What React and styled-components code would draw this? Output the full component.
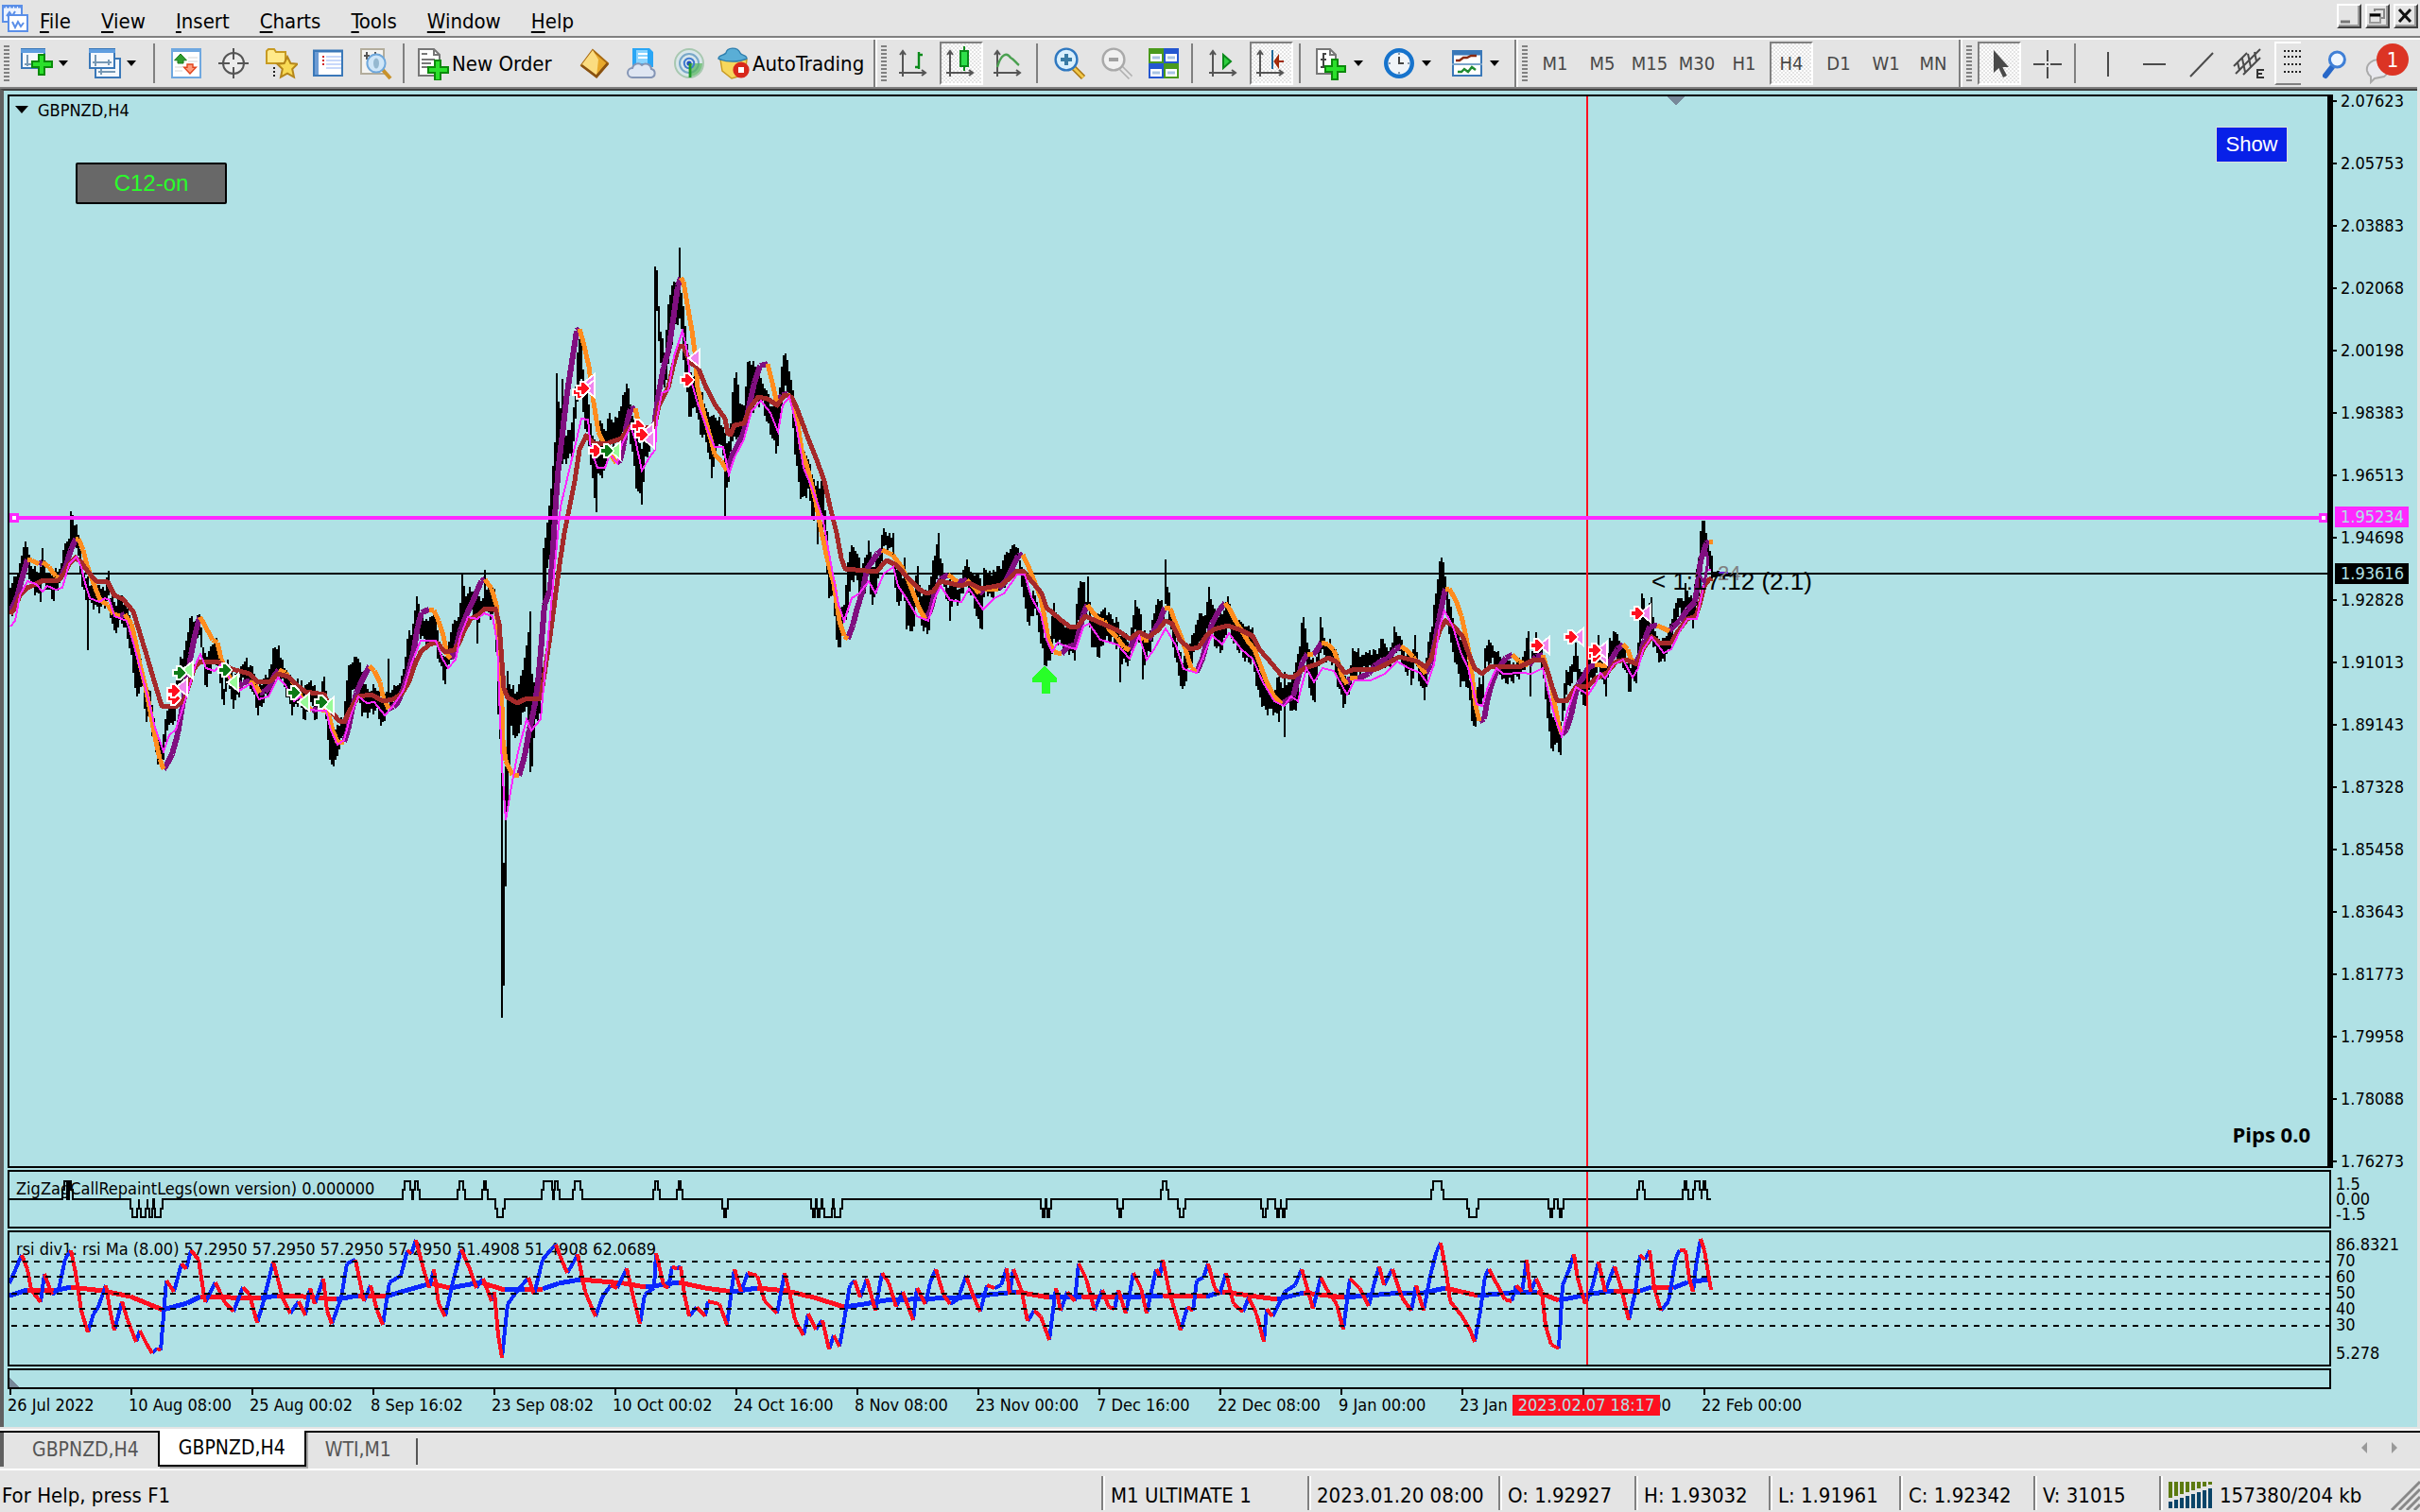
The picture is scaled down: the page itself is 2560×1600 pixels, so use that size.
import { Fragment } from 'react';
import styled, { createGlobalStyle } from 'styled-components';

const chartBg = '#b0e1e5';
const face = '#e4e4e4';
const uiFont = '"DejaVu Sans Condensed", "Noto Sans", sans-serif';

const GlobalStyle = createGlobalStyle`
	* {
		box-sizing: border-box;
	}

	body {
		margin: 0;
		background: ${face};
		font-family: ${uiFont};
		font-size: 22px;
		color: #000;
	}

	button {
		font: inherit;
		color: inherit;
		border: 0;
		padding: 0;
		background: none;
	}
`;

// ---------- series data ----------

const ma = `11,647 18,632 23,613 29,592 34,593 41,597 45,595 52,600 59,610 64,612 70,598 75,582 80,570 83,570 88,582 92,598 97,612 102,625 106,635 114,640 120,650 127,652 132,650 139,660 143,677 148,703 154,727 159,753 164,780 169,803 173,814 177,808 182,798 188,777 193,747 198,720 202,693 206,673 211,653 214,657 220,668 225,677 230,680 234,697 239,710 245,720 252,729 257,722 264,721 270,725 275,733 280,732 285,727 290,715 295,709 302,712 307,718 314,727 321,743 330,752 336,750 345,752 348,757 352,773 357,785 364,785 368,773 372,753 377,733 382,722 388,710 391,705 396,710 402,722 405,737 411,750 416,748 421,743 427,728 432,712 438,687 442,662 446,648 454,645 459,646 464,657 469,673 473,693 477,697 482,687 487,667 495,647 502,632 509,615 513,613 520,623 525,640 530,713 532,783 535,805 542,820 549,821 555,800 560,772 565,750 569,723 572,690 576,640 582,624 585,580 588,531 591,492 595,459 600,415 605,383 610,350 613,348 618,366 623,388 628,426 633,457 638,468 645,479 652,490 656,487 660,470 663,448 667,433 672,432 675,446 682,457 690,468 693,443 697,415 702,388 707,372 712,339 717,303 720,294 723,298 727,322 732,350 735,372 738,410 745,440 752,465 756,481 763,488 769,498 775,481 782,468 787,457 793,427 798,405 804,387 812,385 817,405 822,427 827,418 833,417 838,424 843,443 848,476 855,498 863,531 868,558 875,591 882,618 888,657 893,673 897,676 902,662 907,643 913,624 917,602 922,595 928,586 933,582 944,587 954,600 962,617 968,633 974,647 979,655 984,647 989,628 995,613 1003,608 1013,616 1023,614 1031,622 1036,628 1042,623 1056,623 1064,615 1070,603 1077,588 1082,587 1089,602 1095,617 1101,633 1105,653 1109,677 1115,690 1123,692 1129,685 1138,682 1142,667 1146,650 1150,640 1156,648 1162,655 1168,657 1174,667 1182,675 1189,685 1195,688 1199,677 1204,670 1210,677 1215,677 1221,667 1227,657 1232,643 1238,644 1242,655 1248,670 1254,687 1260,707 1266,711 1272,697 1277,678 1282,660 1289,647 1296,638 1301,645 1307,657 1315,670 1321,680 1327,687 1333,703 1340,722 1348,737 1356,745 1362,741 1368,737 1372,722 1378,700 1383,692 1389,693 1393,688 1398,680 1405,682 1411,688 1416,702 1420,717 1425,724 1428,717 1436,718 1448,713 1454,705 1460,700 1468,697 1476,687 1482,684 1488,688 1495,695 1502,705 1508,713 1513,703 1518,680 1522,657 1526,637 1529,623 1533,623 1540,635 1546,652 1550,670 1554,690 1557,713 1561,747 1565,763 1570,761 1573,743 1577,727 1582,713 1587,705 1593,696 1600,693 1607,700 1617,704 1625,695 1632,693 1637,710 1642,730 1645,747 1649,768 1652,777 1657,772 1662,757 1666,737 1670,723 1675,717 1680,707 1687,703 1700,705 1705,697 1711,687 1717,682 1722,687 1725,697 1730,703 1735,693 1740,677 1745,663 1753,662 1760,665 1766,668 1770,663 1777,657 1785,645 1793,637 1796,617 1799,593 1805,575 1808,573 1812,573`;

const slowMa = `11,650 16,643 21,630 29,622 38,618 46,614 62,614 68,607 73,597 80,590 86,595 93,605 102,615 114,616 121,630 130,634 141,647 148,670 155,693 162,717 168,737 171,747 186,748 195,740 200,725 205,708 211,700 232,701 245,708 264,713 273,722 286,721 294,713 305,716 314,725 323,732 343,735 352,755 359,763 364,764 371,750 379,737 393,735 405,742 416,740 425,734 432,723 439,703 445,690 454,682 462,680 471,690 480,688 486,680 491,667 498,655 507,650 513,644 524,644 528,660 531,701 533,728 537,738 547,744 555,740 572,739 577,706 582,673 587,635 592,597 597,564 602,539 608,509 613,476 620,461 628,469 643,469 657,464 667,451 673,451 692,454 697,429 707,410 712,388 718,367 723,366 730,384 738,388 747,410 757,429 767,443 770,459 773,460 777,450 787,448 793,432 802,420 812,422 822,429 830,418 837,420 843,432 853,459 863,484 872,509 878,536 885,564 890,591 894,602 927,605 938,593 948,598 962,613 972,623 980,628 987,626 995,615 1017,620 1025,617 1038,623 1060,619 1070,610 1076,604 1082,604 1093,617 1102,628 1107,643 1121,655 1133,664 1140,663 1148,652 1164,659 1182,667 1195,676 1205,669 1215,674 1225,667 1233,657 1240,660 1248,677 1259,687 1268,685 1276,673 1284,666 1299,662 1313,667 1325,673 1333,688 1346,703 1356,715 1368,717 1380,707 1393,703 1405,696 1413,700 1423,712 1433,708 1456,708 1468,702 1480,695 1500,700 1508,706 1514,697 1518,683 1523,667 1529,657 1537,662 1547,673 1553,690 1560,707 1568,713 1577,705 1607,706 1623,698 1632,698 1637,710 1642,727 1647,741 1657,742 1667,727 1680,726 1688,718 1700,712 1710,700 1720,698 1732,703 1738,687 1747,674 1757,681 1768,680 1775,668 1785,655 1794,652 1798,640 1803,620 1808,613 1812,612`;

const stopLine = `11,663 16,657 21,630 29,615 38,618 45,626 50,620 59,624 66,622 73,597 81,589 86,600 90,617 95,633 105,637 111,633 116,635 121,652 134,657 141,680 148,707 157,740 164,770 173,795 179,778 186,772 193,750 200,728 207,703 212,692 218,707 227,710 234,703 246,723 253,731 266,723 274,740 284,737 294,717 302,725 311,742 318,737 325,750 336,752 345,752 350,773 357,788 364,783 371,757 379,737 388,744 396,743 407,757 416,747 427,730 436,700 445,678 461,678 468,697 474,707 482,698 487,673 495,653 505,655 512,649 521,652 526,680 528,734 531,810 535,868 540,838 547,800 557,761 562,773 572,761 575,728 580,673 587,597 593,536 602,498 610,465 615,443 622,444 625,476 632,495 640,495 645,481 653,490 658,470 667,451 672,465 679,498 687,484 693,476 695,443 700,416 707,413 713,377 722,350 727,372 730,399 738,427 748,454 756,473 765,473 771,502 777,484 787,465 795,435 805,424 815,437 823,457 828,429 835,420 842,448 850,495 858,514 870,547 878,591 887,640 893,657 901,633 909,628 919,615 926,628 935,607 945,600 950,620 960,635 970,652 982,657 989,633 995,620 1005,635 1017,637 1025,623 1040,645 1052,633 1062,628 1076,608 1084,608 1091,632 1101,650 1107,677 1113,690 1119,680 1125,683 1138,687 1146,663 1152,660 1164,677 1182,682 1195,697 1205,673 1213,698 1221,687 1233,665 1244,683 1252,708 1266,712 1276,687 1282,672 1293,682 1300,670 1313,687 1325,697 1336,722 1348,742 1358,747 1366,737 1373,742 1382,707 1390,722 1399,707 1411,710 1425,735 1433,720 1450,720 1465,713 1478,700 1490,707 1502,712 1510,723 1517,703 1523,663 1528,646 1537,663 1545,690 1553,707 1562,745 1568,747 1574,727 1583,707 1590,713 1610,712 1620,713 1632,707 1638,733 1645,760 1652,779 1658,753 1667,727 1680,735 1688,723 1693,712 1698,718 1707,703 1717,698 1727,717 1733,707 1738,688 1747,674 1760,691 1768,687 1777,668 1785,655 1795,655 1800,630 1806,603 1810,603`;

// x,high,low
const range = `10,623,647 14,610,650 18,610,633 21,597,620 26,577,603 29,580,600 34,603,623 43,603,633 45,583,617 49,605,620 57,607,635 64,597,613 70,573,593 73,575,590 75,542,580 79,552,573 81,555,577 86,590,613 89,603,627 92,612,640 93,613,684 94,623,637 105,623,645 111,627,640 115,605,633 117,630,650 121,640,670 129,633,657 136,650,677 141,673,710 145,687,741 150,700,720 154,727,760 159,733,763 163,760,787 166,777,803 171,790,813 175,760,787 179,747,763 183,743,770 188,713,743 191,698,727 196,687,720 202,652,693 205,657,680 211,648,670 214,677,698 216,690,705 218,700,740 221,690,713 229,675,700 234,700,730 237,730,748 241,700,720 246,713,748 254,713,732 258,698,717 266,705,727 273,727,755 280,720,740 286,710,730 289,685,713 296,685,713 298,700,718 309,720,753 316,723,743 323,727,763 329,723,743 334,730,763 340,730,748 342,710,743 344,730,752 346,733,767 349,767,808 355,773,808 359,767,790 364,757,777 369,702,753 373,703,733 378,693,727 382,710,753 388,733,757 395,727,752 400,730,753 404,743,772 409,733,753 411,700,747 413,730,750 420,727,743 425,717,737 429,693,720 432,663,700 436,670,690 441,628,667 446,650,673 452,657,683 459,650,678 464,673,697 468,693,713 471,693,723 475,683,700 479,660,693 484,657,680 487,640,665 489,603,660 493,633,657 498,620,643 503,630,655 505,623,682 507,635,655 511,635,650 513,600,640 515,625,645 518,627,653 524,623,650 527,653,757 529,693,785 531,728,1073 533,917,1043 535,816,942 537,712,854 541,728,772 547,734,783 552,717,761 557,684,745 561,649,816 563,717,808 567,723,761 571,734,758 574,650,700 575,580,679 579,555,602 583,514,575 587,470,547 589,391,514 592,443,481 595,405,492 599,459,487 605,448,481 608,427,459 612,361,410 615,363,405 618,405,448 623,432,470 628,465,520 631,476,539 633,470,505 635,448,503 640,459,501 644,437,470 650,448,470 656,435,468 661,414,454 664,407,454 668,432,470 673,459,514 679,476,531 683,459,487 691,446,465 693,284,443 695,284,333 698,344,374 703,372,410 707,320,388 711,306,361 715,300,344 717,300,340 719,265,339 721,310,350 723,322,377 725,344,399 730,394,446 735,399,427 742,416,462 747,432,465 753,443,503 760,443,465 765,454,481 767,459,546 769,465,520 771,465,509 773,450,475 775,416,470 778,387,459 783,427,470 788,430,450 790,388,448 795,385,437 800,388,427 807,405,427 811,410,446 816,432,459 822,427,481 826,410,440 828,374,416 832,377,410 837,399,427 842,437,490 848,476,531 855,487,520 861,509,553 863,514,540 865,514,572 867,514,545 872,514,558 873,542,591 877,591,629 882,613,635 886,646,690 888,646,687 893,640,662 897,597,646 901,580,613 907,586,613 911,602,635 917,585,619 919,575,608 923,602,643 932,580,600 934,550,580 936,565,580 940,570,580 945,567,583 948,603,642 955,610,633 957,588,633 959,617,665 967,627,667 969,610,640 970,577,613 972,615,645 974,627,660 982,630,672 987,597,627 993,568,610 995,590,615 999,603,623 1003,620,638 1005,617,660 1007,620,638 1015,623,637 1020,600,622 1022,595,617 1029,607,633 1036,608,663 1039,620,663 1042,598,623 1048,607,633 1058,603,620 1065,587,617 1071,580,600 1076,574,590 1080,597,610 1085,613,647 1089,630,662 1095,627,643 1100,647,673 1105,673,702 1110,677,703 1115,640,680 1121,657,680 1129,663,687 1137,663,695 1140,625,660 1147,613,647 1149,635,650 1151,610,643 1154,653,680 1163,650,695 1168,643,677 1176,657,677 1183,657,687 1185,670,722 1187,668,700 1195,680,702 1198,660,680 1200,637,667 1207,650,680 1209,670,721 1211,672,700 1215,670,692 1219,657,680 1225,630,660 1231,645,660 1233,596,643 1235,618,643 1240,653,677 1244,673,700 1251,703,733 1258,687,707 1265,660,687 1270,650,680 1276,655,675 1278,620,660 1282,637,660 1286,653,687 1293,650,688 1299,633,660 1305,657,680 1312,653,690 1319,663,700 1325,663,700 1331,703,733 1338,720,753 1346,733,752 1353,717,760 1357,730,745 1359,713,776 1361,725,742 1369,713,755 1373,693,743 1376,680,700 1378,648,690 1382,677,703 1387,700,740 1391,700,740 1395,690,705 1397,658,687 1403,680,697 1410,680,700 1415,697,723 1422,717,749 1428,715,728 1431,687,720 1440,692,710 1451,690,707 1459,690,705 1461,672,700 1468,687,707 1473,685,700 1475,660,687 1480,673,687 1487,693,713 1491,690,710 1493,697,728 1497,673,700 1502,707,722 1507,707,738 1512,677,707 1516,653,683 1520,617,660 1524,591,637 1527,600,623 1532,630,660 1535,643,683 1539,663,697 1545,677,723 1552,690,723 1555,720,743 1558,733,767 1561,740,772 1564,720,747 1568,720,750 1571,683,707 1574,678,702 1580,687,700 1585,687,707 1591,703,722 1600,703,720 1610,697,713 1613,690,705 1617,665,700 1619,700,733 1621,690,705 1625,673,697 1632,687,707 1635,720,743 1638,733,763 1641,753,796 1645,763,787 1651,760,797 1653,737,767 1657,713,733 1663,700,720 1667,680,710 1671,710,727 1677,713,750 1682,693,720 1687,693,720 1691,677,707 1695,700,720 1699,703,733 1703,678,703 1709,668,693 1713,683,700 1719,687,707 1722,705,720 1724,707,740 1726,700,720 1731,700,720 1734,670,703 1737,627,673 1742,653,680 1746,628,673 1751,667,687 1757,680,702 1765,670,690 1768,660,680 1772,640,663 1777,633,647 1781,635,650 1783,620,647 1787,633,653 1791,633,663 1796,600,640 1798,580,620 1800,553,593 1803,550,573 1806,573,593 1809,583,603 1811,588,607`;

const rsi = `10,1358 23,1328 29,1343 33,1365 43,1378 47,1348 55,1370 62,1365 69,1332 75,1323 80,1347 86,1387 93,1410 99,1390 104,1383 112,1360 117,1390 121,1408 129,1377 135,1397 144,1420 148,1408 155,1422 161,1432 166,1427 170,1429 176,1355 184,1367 192,1337 197,1343 202,1323 210,1333 217,1378 228,1357 237,1377 247,1388 257,1362 264,1370 272,1400 278,1380 289,1335 299,1373 307,1390 316,1377 323,1392 328,1363 333,1380 342,1353 346,1387 351,1401 361,1373 367,1337 376,1333 385,1377 392,1360 399,1387 405,1402 412,1357 424,1350 431,1323 435,1327 440,1312 448,1343 454,1363 459,1343 464,1380 471,1393 479,1357 488,1322 497,1343 504,1363 511,1353 520,1377 523,1367 527,1413 531,1437 537,1380 548,1365 559,1352 565,1370 574,1333 583,1322 588,1317 594,1333 600,1347 606,1337 611,1327 619,1367 630,1393 637,1373 646,1360 653,1363 663,1342 670,1373 677,1401 682,1370 692,1363 694,1326 702,1360 707,1363 711,1340 716,1343 720,1340 724,1370 729,1393 737,1383 746,1393 749,1377 761,1380 769,1402 777,1343 784,1367 791,1347 801,1350 809,1377 822,1390 830,1347 835,1367 841,1397 850,1413 855,1390 863,1407 870,1397 877,1428 882,1413 888,1425 893,1397 899,1360 904,1355 910,1373 917,1353 926,1387 933,1347 940,1357 948,1383 955,1367 966,1397 970,1363 979,1380 984,1357 990,1343 998,1370 1005,1380 1013,1375 1022,1350 1029,1370 1037,1388 1044,1360 1052,1363 1059,1360 1065,1342 1068,1370 1072,1343 1081,1367 1087,1398 1094,1387 1101,1393 1110,1418 1117,1363 1122,1387 1129,1367 1137,1377 1141,1337 1149,1353 1158,1387 1166,1365 1173,1383 1179,1385 1183,1365 1191,1390 1199,1347 1207,1363 1213,1390 1223,1343 1227,1350 1230,1333 1237,1367 1249,1408 1256,1383 1262,1387 1266,1355 1273,1352 1278,1337 1285,1363 1290,1370 1297,1347 1305,1380 1315,1388 1321,1373 1329,1390 1337,1420 1340,1385 1346,1393 1352,1382 1359,1367 1370,1360 1377,1343 1384,1367 1389,1385 1397,1352 1404,1365 1414,1380 1421,1407 1428,1353 1438,1363 1448,1382 1454,1357 1459,1340 1464,1360 1473,1343 1483,1373 1493,1387 1498,1360 1506,1387 1513,1350 1520,1323 1524,1315 1530,1347 1534,1377 1546,1392 1555,1407 1560,1420 1566,1387 1571,1350 1575,1343 1583,1358 1592,1375 1599,1377 1604,1360 1610,1367 1615,1333 1619,1367 1625,1353 1631,1367 1635,1403 1641,1423 1649,1427 1653,1360 1660,1343 1665,1327 1669,1353 1677,1380 1684,1363 1691,1335 1698,1367 1704,1350 1708,1340 1715,1363 1723,1397 1730,1367 1735,1328 1740,1333 1745,1323 1750,1363 1757,1387 1765,1377 1773,1330 1777,1323 1783,1323 1787,1353 1791,1367 1794,1340 1799,1311 1803,1323 1807,1347 1810,1365`;

const rsiMa = `10,1371 29,1365 57,1366 75,1362 109,1366 138,1372 172,1386 198,1379 212,1372 276,1374 293,1371 321,1372 356,1375 379,1371 408,1372 428,1366 456,1358 476,1363 508,1357 534,1365 555,1364 574,1364 591,1358 614,1354 660,1358 683,1362 718,1357 746,1363 775,1367 801,1363 832,1366 861,1373 893,1383 914,1380 937,1376 989,1374 1018,1373 1075,1367 1110,1373 1144,1372 1184,1373 1230,1371 1276,1372 1293,1367 1322,1371 1351,1375 1379,1368 1422,1373 1471,1369 1506,1368 1529,1363 1563,1371 1598,1368 1626,1367 1649,1376 1684,1369 1707,1366 1735,1366 1747,1362 1770,1363 1785,1357 1807,1354`;

// from, to, direction
const legs = [
	[69, 70, 1], [74, 74, 1], [141, 144, -1], [150, 153, -1], [159, 160, -1], [165, 169, -1],
	[429, 433, 1], [440, 441, 1], [487, 489, 1], [513, 513, 1], [527, 531, -1], [576, 583, 1],
	[588, 589, 1], [609, 613, 1], [694, 695, 1], [719, 719, 1], [767, 767, -1], [861, 861, -1],
	[866, 866, -1], [873, 879, -1], [884, 888, -1], [1104, 1104, -1], [1109, 1109, -1],
	[1185, 1185, -1], [1231, 1233, 1], [1249, 1251, -1], [1337, 1338, -1], [1352, 1352, -1],
	[1358, 1358, -1], [1517, 1524, 1], [1555, 1561, -1], [1641, 1641, -1], [1651, 1651, -1],
	[1735, 1737, 1], [1783, 1783, 1], [1794, 1797, 1], [1803, 1803, 1],
];

const entries = [
	[189, 712, 'green'], [183, 739, 'red'], [183, 731, 'red'], [237, 709, 'green'],
	[310, 733, 'green'], [339, 743, 'green'], [612, 415, 'red'], [616, 411, 'red'],
	[629, 477, 'red'], [641, 477, 'green'], [674, 451, 'red'], [678, 460, 'red'],
	[726, 402, 'red'], [1625, 683, 'red'], [1661, 674, 'red'], [1686, 694, 'red'],
	[1686, 688, 'red'], [1731, 649, 'red'],
];

const exits = [
	[193, 727, 'violet'], [199, 709, 'lime'], [247, 722, 'lime'], [322, 743, 'lime'],
	[348, 747, 'lime'], [624, 405, 'violet'], [624, 411, 'violet'], [651, 477, 'lime'],
	[686, 457, 'violet'], [687, 465, 'violet'], [735, 379, 'violet'], [1634, 683, 'violet'],
	[1670, 674, 'violet'], [1695, 694, 'violet'], [1695, 688, 'violet'], [1741, 649, 'violet'],
];

const tone = { green: '#0d7a16', red: '#ff1020', violet: '#f086ee', lime: '#98fb98' };

const prices = [
	'2.07623', '2.05753', '2.03883', '2.02068', '2.00198', '1.98383', '1.96513', '1.94698',
	'1.92828', '1.91013', '1.89143', '1.87328', '1.85458', '1.83643', '1.81773', '1.79958',
	'1.78088', '1.76273',
];

const dates = [
	'26 Jul 2022', '10 Aug 08:00', '25 Aug 00:02', '8 Sep 16:02', '23 Sep 08:02',
	'10 Oct 00:02', '24 Oct 16:00', '8 Nov 08:00', '23 Nov 00:00', '7 Dec 16:00',
	'22 Dec 08:00', '9 Jan 00:00', '23 Jan 16:00', '7 Feb 08:00', '22 Feb 00:00',
];

const parse = (str) => str.split(' ').map((p) => p.split(',').map(Number));

// splits a line into rising and falling paths
const bySlope = (str) => {
	const pts = parse(str);
	let up = '';
	let down = '';
	for (let i = 1; i < pts.length; i++) {
		const [x0, y0] = pts[i - 1];
		const [x1, y1] = pts[i];
		const d = `M${x0} ${y0}L${x1} ${y1}`;
		if (y1 < y0) up += d;
		else down += d;
	}
	return [up, down];
};

const barsPath = () => {
	const pts = parse(range);
	let d = '';
	let k = 0;
	for (let x = 11; x <= 1811; x += 2) {
		while (k < pts.length - 2 && pts[k + 1][0] < x) k++;
		const [x0, h0, l0] = pts[k];
		const [x1, h1, l1] = pts[k + 1];
		const t = Math.min(1, Math.max(0, (x - x0) / (x1 - x0)));
		const n = Math.abs((Math.sin(x * 12.9898) * 43758.5453) % 1);
		const high = h0 + (h1 - h0) * t + 4 - n * 9;
		const low = l0 + (l1 - l0) * t + Math.cos(x * 7.3) * 4;
		d += `M${x} ${Math.round(high)}V${Math.round(Math.max(low, high + 6))}`;
	}
	return d;
};

const legsPath = () => {
	let d = 'M10 1269';
	legs.forEach(([from, to, dir]) => {
		const mid = 1269 - dir * 10;
		const top = 1269 - dir * 19;
		d += `H${from - 3}V${mid}H${from - 1}V${top}H${to + 1}V${mid}H${to + 3}V1269`;
	});
	return `${d}H1810`;
};

// ---------- icons, drawn on an 18 unit grid ----------

const Plus = ({ x, y }) => (
	<path
		transform={`translate(${x} ${y})`}
		d="M4 .5h3v3.500h4v3h-4v4H4V7H.5V4H4z"
		fill="#2be02b"
		stroke="#0b8a0b"
		strokeWidth="1"
	/>
);

const axes = 'M3 2.500V16M1 14h14M1.500 4.500L3 2.500l1.500 2M13 12.500l2 1.500-2 1.500';

const shapes = {
	newChart: (
		<>
			<rect x="1.500" y="1.500" width="12" height="10" fill="#f4f8fc" stroke="#3a78b8" />
			<path d="M1 2.500h13" stroke="#5f9ee0" strokeWidth="2" />
			<path d="M4.500 4.500v6M3 9.500h5" stroke="#7799b5" />
			<Plus x="6.500" y="4" />
		</>
	),
	profiles: (
		<>
			<rect x="4.500" y="6.500" width="13" height="10" fill="#f4f8fc" stroke="#3a78b8" />
			<path d="M7.500 10v5M6 13.500h9" stroke="#7799b5" />
			<rect x="1.500" y="1.500" width="13" height="10" fill="#f4f8fc" stroke="#3a78b8" />
			<path d="M1 2.500h14" stroke="#5f9ee0" strokeWidth="2" />
			<path d="M4.500 4.500v6M3 8.500h10M11.500 7v3" stroke="#7799b5" fill="none" />
		</>
	),
	marketWatch: (
		<>
			<rect x="1.500" y="1.500" width="15" height="15" fill="#fff" stroke="#6fa8e0" />
			<path d="M1 2h16" stroke="#6fa8e0" strokeWidth="2" />
			<path d="M10 6h5M10 8h5M3 11h4M3 13h4" stroke="#d5d5d5" strokeWidth=".6" />
			<path d="M6 4L2.800 7.400h1.700V9h3V7.400h1.700z" fill="#2f9e2f" stroke="#1c7a1c" strokeWidth=".5" />
			<path d="M11 14.500l-3.200-3.400h1.700V9.500h3v1.600h1.700z" fill="#ff9b7c" stroke="#e0441c" strokeWidth=".7" />
		</>
	),
	target: (
		<>
			<circle cx="9" cy="9" r="5.500" fill="#ececec" stroke="#555" />
			<path d="M9 1v6M9 11v6M1 9h6M11 9h6" stroke="#555" />
		</>
	),
	navigator: (
		<>
			<path d="M1.500 2.500l1-1h3l1 1.500h5v6h-10z" fill="#ffe98a" stroke="#c79a22" />
			<path d="M5.500 11v6" stroke="#222" strokeDasharray="1 1" />
			<path d="M12.500 5.500l1.700 3.500 3.600.4-2.700 2.600.9 4.300-3.500-2-3.500 2 .9-4.300-2.700-2.600 3.600-.4z" fill="#f8da55" stroke="#b5861a" />
		</>
	),
	terminal: (
		<>
			<rect x="1.500" y="2.500" width="15" height="13" fill="#fff" stroke="#3a78b8" />
			<path d="M1 2.500h16" stroke="#3a78b8" strokeWidth="1.500" />
			<path d="M3 3v12" stroke="#6d9cd4" strokeWidth="2" />
			<path d="M8 5.500h8M8 7.500h8M8 9.500h8M8 11.500h8" stroke="#c8d8fa" />
			<path d="M6.500 5v6" stroke="#d02020" strokeDasharray="1 1" />
		</>
	),
	tester: (
		<>
			<rect x="1.500" y="1.500" width="12" height="13" fill="#f4f4f2" stroke="#b3ad9c" />
			<path d="M4.500 3v4M3 5h3M9 3v3M11 4v3" stroke="#555" />
			<path d="M13 12.500l4 4.500" stroke="#c8922a" strokeWidth="2" />
			<circle cx="9.500" cy="9" r="4.800" fill="#cfe6f8" stroke="#6fa8dc" />
			<ellipse cx="9.500" cy="9" rx="1.500" ry="2.800" fill="#95b8d0" />
		</>
	),
	newOrder: (
		<>
			<path d="M1.500 1.500h8l3 3v11h-11z" fill="#fff" stroke="#777" />
			<path d="M9.500 1.500v3h3" fill="none" stroke="#777" />
			<path d="M3 4h3M3 7h7M3 9h5M3 11h4" stroke="#777" />
			<Plus x="6" y="7" />
		</>
	),
	metaEditor: (
		<>
			<path d="M8 2l8 7-6 7-8-6z" fill="#e8a92c" stroke="#a86a10" />
			<path d="M8 2l3 5-1 9-8-6z" fill="#fbdc80" />
			<path d="M2 10l8 6 6-7" fill="none" stroke="#8a5210" strokeWidth="1.400" />
		</>
	),
	cloud: (
		<>
			<path d="M4 1h9l2 2v8H4z" fill="#2aa6f5" />
			<path d="M6 2h6v7H6z" fill="#8ad4ff" />
			<path d="M7 4h5M7 6h5" stroke="#fff" />
			<path d="M4 16.500a2.500 2.500 0 0 1 0-5 3 3 0 0 1 5-1.500 3 3 0 0 1 5 2 2.300 2.300 0 0 1 0 4.500z" fill="#dfe6f2" stroke="#8495b5" />
		</>
	),
	signals: (
		<>
			<circle cx="9" cy="9" r="7.500" fill="#d8e6ea" stroke="#a8c8b0" />
			<circle cx="9" cy="9" r="5" fill="none" stroke="#78a8c8" />
			<path d="M9 9h7a7 7 0 0 1-7 7z" fill="#55b558" opacity=".7" />
			<circle cx="9" cy="9" r="2.600" fill="none" stroke="#3f7ad0" />
			<circle cx="9" cy="9" r="1.300" fill="#2050c0" />
			<path d="M9.500 9v7.500" stroke="#1f9a2a" strokeWidth="1.400" />
		</>
	),
	autoTrading: (
		<>
			<path d="M2 7l1 6 5 4 7-2 1-8z" fill="#f6d75c" stroke="#c79a22" strokeWidth=".7" />
			<path d="M1 6.500c0-2 3-1.500 4-3 .5-3 6-3.500 7.500 0 .5 1.500 3.500 1 3.500 3-4 2-11 2-15 0z" fill="#5aaed6" stroke="#2f7fae" strokeWidth=".7" />
			<circle cx="13" cy="12.500" r="4.300" fill="#d8281c" />
			<rect x="11.500" y="11" width="3" height="3" fill="#fff" />
		</>
	),
	barChart: (
		<>
			<path d={axes} fill="none" stroke="#555" />
			<path d="M11.500 3v9M9.500 11h2M11.500 4.500h2" stroke="#0a8a1a" strokeWidth="1.200" fill="none" />
		</>
	),
	candles: (
		<>
			<path d={axes} fill="none" stroke="#555" />
			<path d="M10.500 0v13" stroke="#0a8a1a" />
			<rect x="8.500" y="2.500" width="4" height="8" fill="#2fe04a" stroke="#0a8a1a" />
		</>
	),
	lineChart: (
		<>
			<path d={axes} fill="none" stroke="#555" />
			<path d="M3 11c2-7 5-8 7-5 2 1 3 3 4.500 4" fill="none" stroke="#4aa050" strokeWidth="1.200" />
		</>
	),
	zoomIn: (
		<>
			<path d="M11.500 11.500l5 5" stroke="#a87410" strokeWidth="3" />
			<path d="M11.500 11.500l5 5" stroke="#f2c84a" strokeWidth="1.500" />
			<circle cx="7.500" cy="7" r="5.700" fill="#d9f0fd" stroke="#2f78c0" strokeWidth="1.200" />
			<path d="M7.500 4v6M4.500 7h6" stroke="#3a7ca5" strokeWidth="2" />
		</>
	),
	zoomOut: (
		<>
			<path d="M11.500 11.500l5 5" stroke="#b0b0b0" strokeWidth="3" />
			<path d="M11.500 11.500l5 5" stroke="#e6e6e6" strokeWidth="1.300" />
			<circle cx="7.500" cy="7" r="5.700" fill="#f1f1f1" stroke="#a9a9a9" strokeWidth="1.200" />
			<path d="M5 7h5" stroke="#a0a0a0" strokeWidth="2" />
		</>
	),
	tile: (
		<>
			<path d="M1 1h8v8H1zM9 9h8v8H9z" fill="#4a9a1c" />
			<path d="M9 1h8v8H9zM1 9h8v8H1z" fill="#2457d0" />
			<path d="M2 4h6v4H2zM10 4h6v4h-6zM2 12h6v4H2zM10 12h6v4h-6z" fill="#fff" />
			<path d="M3 6h4M11 6h4M3 14h4M11 14h4" stroke="#a8c4e4" strokeWidth="1.500" />
		</>
	),
	autoScroll: (
		<>
			<path d={axes} fill="none" stroke="#555" />
			<path d="M8.500 4.500v7l4-3.500z" fill="#2fd03f" stroke="#0a8a1a" />
		</>
	),
	chartShift: (
		<>
			<path d={axes} fill="none" stroke="#555" />
			<path d="M9.500 2v10" stroke="#1f6a9a" />
			<path d="M15.500 8H12M12.500 5.500L10.800 8l1.700 2.500z" fill="#c0391a" stroke="#a02a08" />
		</>
	),
	indicators: (
		<>
			<path d="M1.500 1.500h7l3 3v10h-10z" fill="#fff" stroke="#777" />
			<path d="M8.500 1.500v3h3" fill="none" stroke="#777" />
			<path d="M6.500 4H5v7H3.500M3.500 7h3" stroke="#444" fill="none" />
			<Plus x="5.500" y="6.500" />
		</>
	),
	periods: (
		<>
			<circle cx="9" cy="9" r="6.900" fill="#f0f4f8" stroke="#1673cc" strokeWidth="2.200" />
			<path d="M9 5.500V9h2.500" stroke="#444" fill="none" />
			<path d="M9 3.500v1M9 13.500v1M3.500 9h1M13.500 9h1" stroke="#8899aa" />
		</>
	),
	template: (
		<>
			<rect x="1.500" y="2.500" width="15" height="13" fill="#fff" stroke="#3a78b8" />
			<path d="M1 3.500h16" stroke="#3a78b8" strokeWidth="2.500" />
			<path d="M1 9.500h16" stroke="#7ba4cc" />
			<path d="M3 7.500h2l2-1.500h2l2-1h3" stroke="#8a2a10" fill="none" strokeWidth="1.200" />
			<path d="M4 13.500h2l1.500-1.500 2 1.500 2-2.500 2 1.500" stroke="#1f8a30" fill="none" strokeWidth="1.200" />
		</>
	),
	cursor: <path d="M6 2v12l2.700-2.500L11 16.500l2-1-2.300-4.500H14z" fill="#4a4a4a" />,
	crosshair: <path d="M9.500 2v6M9.500 11v6M2 9.500h6M11 9.500h6M9 9.500h1" stroke="#4a4a4a" />,
	vline: <path d="M9.500 3v13" stroke="#4a4a4a" />,
	hline: <path d="M3 9.500h12" stroke="#4a4a4a" />,
	trend: <path d="M3 16L15 3.500" stroke="#4a4a4a" />,
	channel: (
		<>
			<path d="M1 10.500L8 3.500M2 14.500L15 1.500M6 15L15 6M3 8.500l1 4M5.500 6.500l1.500 7M8.500 4l1.500 7M12 3l1 5" stroke="#4a4a4a" />
			<path d="M17 12.500h-3.500v4H17M13.500 14.500H16" stroke="#333" fill="none" />
		</>
	),
	fibo: <path d="M0 2.500h18M0 5.500h18M0 9.500h18M0 13.500h18" stroke="#222" strokeDasharray="1 1" />,
	search: (
		<>
			<path d="M5 11L1.500 15.500" stroke="#2868c8" strokeWidth="3" strokeLinecap="round" />
			<circle cx="7.700" cy="7" r="4" fill="#eef6ff" stroke="#3f7fd6" strokeWidth="1.500" />
		</>
	),
};

const Icon = ({ name, size = 36 }) => (
	<svg width={size} height={size} viewBox="0 0 18 18" aria-hidden="true">
		{shapes[name]}
	</svg>
);

// ---------- menu and toolbar ----------

const Window = styled.div`
	display: flex;
	flex-direction: column;
	height: 100vh;
	min-height: 900px;
	overflow: hidden;
`;

const MenuBar = styled.nav`
	display: flex;
	align-items: center;
	height: 40px;
	padding-right: 2px;
	border-bottom: 2px solid #808080;
`;

const MenuItem = styled.button`
	height: 36px;
	padding: 6px 16px 0;

	&:first-of-type {
		padding-left: 12px;
	}

	&::first-letter {
		text-decoration: underline;
		text-underline-offset: 3px;
	}
`;

const WindowButtons = styled.div`
	display: flex;
	gap: 4px;
	margin-left: auto;
	padding-bottom: 4px;
`;

const WindowButton = styled.button`
	width: 26px;
	height: 26px;
	background: ${face};
	border: 2px solid;
	border-color: #fff #404040 #404040 #fff;
	box-shadow: inset -2px -2px #9a9a9a;

	svg {
		display: block;
	}
`;

const Toolbar = styled.div`
	display: flex;
	height: 52px;
	border-top: 2px solid #fff;
`;

const Section = styled.div`
	display: flex;
	align-items: center;
	flex: ${({ $grow }) => ($grow ? 1 : 'none')};
	gap: 4px;
	padding: 0 4px;
	border-right: ${({ $grow }) => ($grow ? 0 : '2px solid #808080')};
	box-shadow: ${({ $grow }) => ($grow ? 'none' : '2px 0 #fff')};
	margin-right: ${({ $grow }) => ($grow ? 0 : '2px')};
`;

const Grip = styled.i`
	width: 6px;
	height: 38px;
	margin-right: 2px;
	background: repeating-linear-gradient(#808080 0 2px, transparent 2px 4px);
`;

const Divider = styled.i`
	width: 2px;
	height: 42px;
	margin: 0 6px 0 2px;
	background: #808080;
`;

const ToolButton = styled.button`
	display: flex;
	align-items: center;
	justify-content: center;
	flex: none;
	width: 46px;
	height: 46px;
	font-size: 20px;
	color: #484848;
	border: 2px solid transparent;
	${({ $pressed }) =>
		$pressed &&
		`
		border-color: #808080 #fff #fff #808080;
		background: repeating-conic-gradient(#fff 0 25%, #e4e4e4 0 50%) 0 0 / 4px 4px;
	`}

	svg {
		flex: none;
	}
`;

const LabelButton = styled(ToolButton)`
	width: 164px;
	gap: 2px;
	padding: 0;
	color: #000;
	font-size: 22px;
	white-space: nowrap;
	justify-content: flex-start;
`;

const SplitButton = styled(ToolButton)`
	width: 68px;
	padding-left: 2px;
	gap: 6px;
	justify-content: flex-start;

	&::after {
		content: '';
		border: 5px solid transparent;
		border-top: 6px solid #000;
		border-bottom: 0;
	}
`;

const ClippedButton = styled(ToolButton)`
	width: 28px;
	padding-left: 8px;
	justify-content: flex-start;
	overflow: hidden;
	border-color: #fff transparent #808080 #fff;
	border-right: 0;
`;

const ChatButton = styled(ToolButton)`
	margin-right: 8px;
`;

const Spacer = styled.i`
	flex: 1;
`;

// ---------- chart ----------

const Workspace = styled.main`
	flex: 1;
	min-height: 0;
	display: grid;
	grid-template-columns: minmax(0, 1fr) 89px;
	grid-template-rows: minmax(0, 1fr) 62px 144px 22px 38px;
	row-gap: 2px;
	padding: 4px 0 0 4px;
	margin: 2px 3px 2px 0;
	background: ${chartBg};
	border-top: 2px solid #404040;
	border-left: 4px solid #606060;
	box-shadow: 0 -2px #808080;
`;

const Pane = styled.section`
	display: grid;
	grid-template: minmax(0, 1fr) / minmax(0, 1fr);
	min-height: 0;
	border: 2px solid #000;
	border-right-width: ${({ $main }) => ($main ? 6 : 2)}px;
	margin-right: ${({ $main }) => ($main ? 0 : 2)}px;

	& > * {
		grid-area: 1 / 1;
	}
`;

const Plot = styled.svg`
	display: block;
	width: 100%;
	height: 100%;
	fill: none;
	shape-rendering: crispEdges;
`;

const Overlay = styled.div`
	display: flex;
	flex-direction: column;
	padding: 2px 18px 20px 6px;
`;

const Symbol = styled.div`
	display: flex;
	align-items: center;
	gap: 10px;
	height: 24px;
	font-size: 18px;

	&::before {
		content: '';
		border: 7px solid transparent;
		border-top: 8px solid #000;
		border-bottom: 0;
	}
`;

const PlotControls = styled.div`
	display: flex;
	justify-content: space-between;
	align-items: flex-start;
	padding: 6px 24px 0 64px;
`;

const ScriptButton = styled.button`
	width: 160px;
	height: 44px;
	margin-top: 38px;
	border: 2px solid #000;
	border-radius: 2px;
	background: #686868;
	color: #28ff28;
	font: 24px 'Liberation Sans', sans-serif;
`;

const ShowButton = styled.button`
	width: 76px;
	height: 38px;
	background: #0820e8;
	color: #fff;
	border: 1px solid #ddd;
	font: 22px 'Liberation Sans', sans-serif;
`;

const Pips = styled.strong`
	margin-top: auto;
	align-self: flex-end;
	font: bold 22px/28px 'Open Sans', sans-serif;
`;

const PaneTitle = styled.span`
	padding: 6px 7px;
	font-size: 18px;
	line-height: 24px;
	white-space: nowrap;
`;

const PriceAxis = styled.div`
	position: relative;
	display: flex;
	flex-direction: column;
	justify-content: space-between;
	margin: -4px 0;
	font-size: 18px;
	line-height: 22px;
`;

const Price = styled.span`
	display: flex;
	align-items: center;
	gap: 4px;

	&::before {
		content: '';
		width: 4px;
		height: 2px;
		background: #000;
	}
`;

const PriceTag = styled.span`
	position: absolute;
	left: 2px;
	width: 78px;
	height: 22px;
	padding-left: 6px;
	color: ${chartBg};
	background: ${({ $color }) => $color};
`;

const LevelAxis = styled.div`
	display: flex;
	flex-direction: column;
	justify-content: ${({ $center }) => ($center ? 'center' : 'flex-start')};
	padding: 6px 0 6px 3px;
	font-size: 18px;
	line-height: ${({ $center }) => ($center ? 16 : 17)}px;

	& > :last-child {
		margin-top: ${({ $center }) => ($center ? 0 : 'auto')};
	}
`;

const DateAxis = styled.div`
	position: relative;
	display: flex;
	grid-column: 1 / -1;
	margin-top: -2px;
	overflow: hidden;
	font-size: 18px;
`;

const DateMark = styled.span`
	flex: none;
	width: 128px;
	line-height: 22px;
	white-space: nowrap;

	&::before {
		content: '';
		display: block;
		width: 2px;
		height: 6px;
		margin-left: 2px;
		background: #000;
	}
`;

const CrosshairDate = styled.span`
	position: absolute;
	left: 1592px;
	top: 6px;
	width: 156px;
	height: 22px;
	text-align: center;
	line-height: 22px;
	color: ${chartBg};
	background: #ff1020;
`;

// ---------- tabs and status ----------

const Tabs = styled.div`
	display: flex;
	align-items: flex-start;
	height: 44px;
	padding-right: 20px;
	border-top: 2px solid #fff;
	border-bottom: 2px solid #fff;
	box-shadow: inset 0 2px #000;
`;

const Tab = styled.button`
	height: 36px;
	padding: 0 20px;
	margin-top: ${({ $active }) => ($active ? 0 : 2)}px;
	font-size: 21px;
	color: ${({ $active }) => ($active ? '#000' : '#555')};
	${({ $active }) =>
		$active &&
		`
		height: 38px;
		background: #fff;
		border: 2px solid #000;
		border-top: 0;
		box-shadow: 2px 2px #aaa;
	`}

	&:first-child {
		padding-left: 30px;
		border-left: 4px solid #606060;
	}
`;

const TabDivider = styled.i`
	width: 2px;
	height: 28px;
	margin: 8px auto 0 6px;
	background: #555;
`;

const ScrollArrow = styled.button`
	margin: 12px 4px 0 22px;
	border: 6px solid transparent;
	border-${({ $dir }) => ($dir === 'left' ? 'right' : 'left')}-color: #999;
	border-${({ $dir }) => $dir}-width: 0;
`;

const StatusBar = styled.footer`
	display: flex;
	align-items: center;
	height: 44px;
	padding: 6px 0 2px;
`;

const Hint = styled.span`
	flex: 1;
	padding: 4px 2px 0;
`;

const StatusCell = styled.span`
	display: flex;
	align-items: center;
	gap: 8px;
	flex: none;
	width: ${({ $width }) => $width}px;
	height: 36px;
	padding: 4px 0 0 8px;
	border-left: 2px solid #808080;
	box-shadow: inset 2px 0 #fff;
	white-space: nowrap;
`;

const ResizeCorner = styled.svg`
	margin-left: auto;
	align-self: flex-end;
`;

const Entry = ({ x, y, color }) => (
	<path
		d={`M${x - 5} ${y - 2}h4v-4h3l5 6-5 6h-3v-4h-4z`}
		fill={tone[color]}
		stroke="#fff"
		strokeWidth="4"
		paintOrder="stroke"
	/>
);

const Exit = ({ x, y, color }) => (
	<path
		d={`M${x - 5} ${y}l9 -7v14z`}
		fill={tone[color]}
		stroke="#fff"
		strokeWidth="4"
		paintOrder="stroke"
	/>
);

const [maUp, maDown] = bySlope(ma);
const [rsiUp, rsiDown] = bySlope(rsi);
const [rsiMaUp, rsiMaDown] = bySlope(rsiMa);
const bars = barsPath();

const PricePlot = () => (
	<Plot viewBox="10 102 2452 1132" preserveAspectRatio="none">
		<path d="M1764 102h18l-9 10z" fill="#778899" />
		<path d="M10 607H2462" stroke="#000" strokeWidth="2" />
		<path d={bars} stroke="#000" strokeWidth="2" />
		<g strokeWidth="5" strokeLinejoin="round">
			<path d={maUp} stroke="#800f80" strokeWidth="6" />
			<path d={maDown} stroke="#ff8c1e" />
			<polyline points={slowMa} stroke="#a52a2a" />
		</g>
		<polyline points={stopLine} stroke="#ff28ff" strokeWidth="2" />
		<path d="M1092 718l13-14 13 14v4h-7v12h-9v-12h-10z" fill="#28ff28" />
		<path d="M1810 606l8-2 8 3 6 1v2h-14l-8 2z" fill="#000" />
		<path d="M1818 606h10" stroke="#6a1fd0" strokeWidth="2" />
		<text x="1817" y="614" fill="#808080" fontSize="22" fontFamily="Liberation Sans">
			24
		</text>
		<text x="1747" y="624" fill="#000" fontSize="26" fontFamily="Liberation Sans">
			{'< 1:17:12 (2.1)'}
		</text>
		<path d="M1797 607l7-28 3 14-4 24z" stroke="#800f80" strokeWidth="3" />
		{exits.map(([x, y, color], i) => (
			<Exit key={i} x={x} y={y} color={color} />
		))}
		{entries.map(([x, y, color], i) => (
			<Entry key={i} x={x} y={y} color={color} />
		))}
		<path d="M1679 102V1234" stroke="#ff1020" strokeWidth="2" />
		<path d="M10 548H2462" stroke="#ff28ff" strokeWidth="4" />
		<g fill="#fff" stroke="#ff28ff" strokeWidth="3">
			<rect x="11" y="544" width="7" height="7" />
			<rect x="2454" y="544" width="7" height="7" />
		</g>
	</Plot>
);

const timeframes = ['M1', 'M5', 'M15', 'M30', 'H1', 'H4', 'D1', 'W1', 'MN'];

const Tool = ({ name, pressed }) => (
	<ToolButton $pressed={pressed} aria-label={name}>
		<Icon name={name} />
	</ToolButton>
);

const Split = ({ name }) => (
	<SplitButton aria-label={name}>
		<Icon name={name} />
	</SplitButton>
);

const Traffic = () => (
	<svg width="46" height="28" viewBox="0 0 46 28" shapeRendering="crispEdges" aria-hidden="true">
		{[0, 1, 2, 3, 4, 5, 6, 7].map((i) => (
			<Fragment key={i}>
				<rect x={i * 6} y="0" width="4" height={17 - i * 2} fill="#5c7a10" />
				<rect x={i * 6} y={21 - i * 2} width="4" height={7 + i * 2} fill="#0a4468" />
			</Fragment>
		))}
	</svg>
);

export default function App() {
	return (
		<Window>
			<GlobalStyle />
			<MenuBar>
				<svg width="30" height="32" viewBox="0 0 30 32" aria-hidden="true">
					<rect x="3" y="3" width="20" height="17" fill="#eef4ff" stroke="#5b8fe8" strokeWidth="2" />
					<path d="M3 4h20" stroke="#5b8fe8" strokeWidth="3" strokeDasharray="3 1" />
					<path d="M7 14l3-4 3 4 3-5" stroke="#5b8fe8" strokeWidth="2" fill="none" />
					<rect x="9" y="13" width="20" height="17" fill="#fff" stroke="#5b8fe8" strokeWidth="2" />
					<path d="M13 20l3 6 3-6 3 5 3-4" stroke="#5b8fe8" strokeWidth="2" fill="none" />
				</svg>
				{['File', 'View', 'Insert', 'Charts', 'Tools', 'Window', 'Help'].map((item) => (
					<MenuItem key={item}>{item}</MenuItem>
				))}
				<WindowButtons>
					<WindowButton aria-label="Minimize">
						<svg width="22" height="22">
							<path d="M2 17h10" stroke="#777" strokeWidth="3" />
						</svg>
					</WindowButton>
					<WindowButton aria-label="Restore">
						<svg width="22" height="22" fill="none">
							<path d="M8 6V4h10v9h-3M8 4h10" stroke="#888" strokeWidth="2" />
							<path d="M3 9h11v9H3z" stroke="#999" strokeWidth="2" />
							<path d="M3 10h11" stroke="#000" strokeWidth="3" />
						</svg>
					</WindowButton>
					<WindowButton aria-label="Close">
						<svg width="22" height="22">
							<path d="M4 4l12 13M16 4L4 17" stroke="#111" strokeWidth="3" />
						</svg>
					</WindowButton>
				</WindowButtons>
			</MenuBar>
			<Toolbar>
				<Section>
					<Grip />
					<Split name="newChart" />
					<Split name="profiles" />
					<Divider />
					<Tool name="marketWatch" />
					<Tool name="target" />
					<Tool name="navigator" />
					<Tool name="terminal" />
					<Tool name="tester" />
					<Divider />
					<LabelButton>
						<Icon name="newOrder" />
						New Order
					</LabelButton>
					<Tool name="metaEditor" />
					<Tool name="cloud" />
					<Tool name="signals" />
					<LabelButton>
						<Icon name="autoTrading" />
						AutoTrading
					</LabelButton>
				</Section>
				<Section>
					<Grip />
					<Tool name="barChart" />
					<Tool name="candles" pressed />
					<Tool name="lineChart" />
					<Divider />
					<Tool name="zoomIn" />
					<Tool name="zoomOut" />
					<Tool name="tile" />
					<Divider />
					<Tool name="autoScroll" />
					<Tool name="chartShift" pressed />
					<Divider />
					<Split name="indicators" />
					<Split name="periods" />
					<Split name="template" />
				</Section>
				<Section>
					<Grip />
					{timeframes.map((tf) => (
						<ToolButton key={tf} $pressed={tf === 'H4'}>
							{tf}
						</ToolButton>
					))}
				</Section>
				<Section $grow>
					<Grip />
					<Tool name="cursor" pressed />
					<Tool name="crosshair" />
					<Divider />
					<Tool name="vline" />
					<Tool name="hline" />
					<Tool name="trend" />
					<Tool name="channel" />
					<ClippedButton aria-label="fibonacci">
						<Icon name="fibo" />
					</ClippedButton>
					<Spacer />
					<Tool name="search" />
					<ChatButton aria-label="messages">
						<svg width="46" height="44" viewBox="0 0 46 44">
							<path d="M2 30a11 10 0 1 1 18 6l-10 2-4 4v-6a10 10 0 0 1-4-6z" fill="#e8e8ee" stroke="#aaa" strokeWidth="2" />
							<circle cx="29" cy="18" r="17" fill="#dc3424" />
							<text x="29" y="26" fill="#fff" fontSize="22" textAnchor="middle">
								1
							</text>
						</svg>
					</ChatButton>
				</Section>
			</Toolbar>
			<Workspace>
				<Pane $main>
					<PricePlot />
					<Overlay>
						<Symbol>GBPNZD,H4</Symbol>
						<PlotControls>
							<ScriptButton>C12-on</ScriptButton>
							<ShowButton>Show</ShowButton>
						</PlotControls>
						<Pips>Pips 0.0</Pips>
					</Overlay>
				</Pane>
				<PriceAxis>
					{prices.map((p) => (
						<Price key={p}>{p}</Price>
					))}
					<PriceTag $color="#ff28ff" style={{ top: 'calc((100% - 22px) * 0.392)' }}>
						1.95234
					</PriceTag>
					<PriceTag $color="#000" style={{ top: 'calc((100% - 22px) * 0.446)' }}>
						1.93616
					</PriceTag>
				</PriceAxis>
				<Pane>
					<PaneTitle>ZigZagCallRepaintLegs(own version) 0.000000</PaneTitle>
					<Plot viewBox="10 1240 2454 58" preserveAspectRatio="none">
						<path d={legsPath()} stroke="#000" strokeWidth="2" />
						<path d="M1679 1240v58" stroke="#ff1020" strokeWidth="2" />
					</Plot>
				</Pane>
				<LevelAxis $center>
					<span>1.5</span>
					<span>0.00</span>
					<span>-1.5</span>
				</LevelAxis>
				<Pane>
					<PaneTitle>
						rsi div1: rsi Ma (8.00) 57.2950 57.2950 57.2950 57.2950 51.4908 51.4908 62.0689
					</PaneTitle>
					<Plot viewBox="10 1304 2454 140" preserveAspectRatio="none">
						<g strokeWidth="4">
							<path d={rsiMaUp} stroke="#0a28ff" strokeWidth="5" />
							<path d={rsiMaDown} stroke="#ff1020" strokeWidth="5" />
							<path d={rsiUp} stroke="#0a28ff" />
							<path d={rsiDown} stroke="#ff1020" />
						</g>
						<path
							d="M12 1335H2464M12 1351H2464M12 1369H2464M12 1385H2464M12 1403H2464"
							stroke="#000"
							strokeWidth="2"
							strokeDasharray="6 6"
						/>
						<path d="M1679 1304v140" stroke="#ff1020" strokeWidth="2" />
					</Plot>
				</Pane>
				<LevelAxis>
					{['86.8321', '70', '60', '50', '40', '30', '5.278'].map((level) => (
						<span key={level}>{level}</span>
					))}
				</LevelAxis>
				<Pane>
					<Plot viewBox="10 1450 2454 18" preserveAspectRatio="none">
						<path d="M10 1458l10 10H10z" fill="#778899" />
					</Plot>
				</Pane>
				<DateAxis>
					{dates.map((d) => (
						<DateMark key={d}>{d}</DateMark>
					))}
					<CrosshairDate>2023.02.07 18:17</CrosshairDate>
				</DateAxis>
			</Workspace>
			<Tabs>
				<Tab>GBPNZD,H4</Tab>
				<Tab $active>GBPNZD,H4</Tab>
				<Tab>WTI,M1</Tab>
				<TabDivider />
				<ScrollArrow $dir="left" aria-label="Scroll tabs left" />
				<ScrollArrow $dir="right" aria-label="Scroll tabs right" />
			</Tabs>
			<StatusBar>
				<Hint>For Help, press F1</Hint>
				<StatusCell $width={218}>M1 ULTIMATE 1</StatusCell>
				<StatusCell $width={202}>2023.01.20 08:00</StatusCell>
				<StatusCell $width={144}>O: 1.92927</StatusCell>
				<StatusCell $width={142}>H: 1.93032</StatusCell>
				<StatusCell $width={138}>L: 1.91961</StatusCell>
				<StatusCell $width={142}>C: 1.92342</StatusCell>
				<StatusCell $width={133}>V: 31015</StatusCell>
				<StatusCell $width={276}>
					<Traffic />
					157380/204 kb
					<ResizeCorner width="32" height="32">
						<path d="M2 32L32 2M10 32L32 10M18 32L32 18M26 32l6-6" stroke="#888" strokeWidth="3" />
					</ResizeCorner>
				</StatusCell>
			</StatusBar>
		</Window>
	);
}
